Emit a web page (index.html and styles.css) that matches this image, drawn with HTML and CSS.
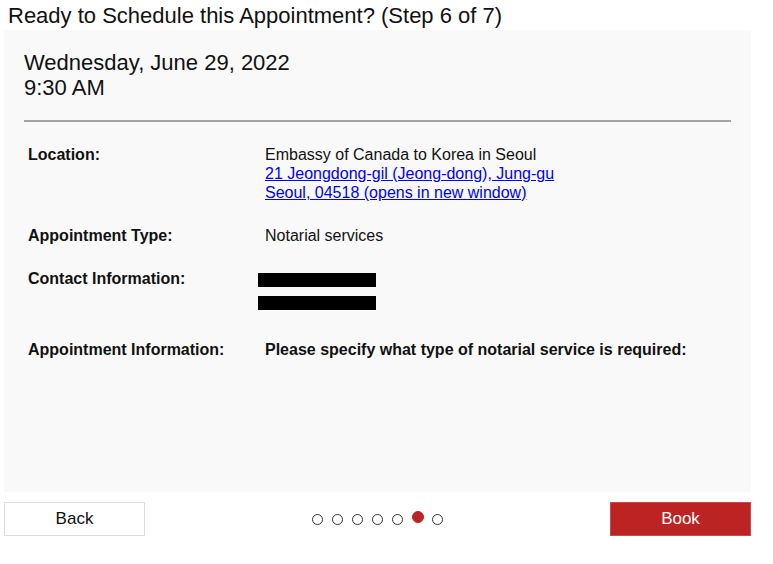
FILE: index.html
```html
<!DOCTYPE html>
<html lang="en">
<head>
    <meta charset="UTF-8">
    <meta name="viewport" content="width=device-width, initial-scale=1.0">
    <title>Schedule Appointment</title>
    <link rel="stylesheet" href="styles.css">
</head>
<body>
    <div class="page">
        <h1 class="title">Ready to Schedule this Appointment? (Step 6 of 7)</h1>

        <div class="panel">
            <div class="when">
                <div>Wednesday, June 29, 2022</div>
                <div>9:30 AM</div>
            </div>
            <hr class="divider">

            <div class="details">
                <div class="row">
                    <div class="label">Location:</div>
                    <div class="value">
                        Embassy of Canada to Korea in Seoul<br>
                        <a href="#">21 Jeongdong-gil (Jeong-dong), Jung-gu<br>Seoul, 04518 (opens in new window)</a>
                    </div>
                </div>
                <div class="row">
                    <div class="label">Appointment Type:</div>
                    <div class="value">Notarial services</div>
                </div>
                <div class="row">
                    <div class="label">Contact Information:</div>
                    <div class="value contact">
                        <div class="redact"></div>
                        <div class="redact"></div>
                    </div>
                </div>
                <div class="row">
                    <div class="label">Appointment Information:</div>
                    <div class="value strong">Please specify what type of notarial service is required:</div>
                </div>
            </div>
        </div>

        <div class="footer">
            <button class="btn btn-back">Back</button>
            <div class="steps">
                <span class="dot"></span>
                <span class="dot"></span>
                <span class="dot"></span>
                <span class="dot"></span>
                <span class="dot"></span>
                <span class="dot active"></span>
                <span class="dot"></span>
            </div>
            <button class="btn btn-book">Book</button>
        </div>
    </div>
</body>
</html>
```

FILE: styles.css
```css
body {
    margin: 0;
    font-family: "Liberation Sans", Arial, sans-serif;
    color: #111;
    background: #fff;
}

.page {
    width: 747px;
    margin-left: 4px;
}

.title {
    margin: 0;
    padding-left: 4px;
    font-size: 22px;
    font-weight: normal;
    line-height: 31px;
    height: 30px;
}

/* panel gris con los datos de la cita */
.panel {
    background: #f9f9f9;
    height: 462px;
    box-sizing: border-box;
    padding: 20px 20px 0;
}

.when {
    font-size: 22px;
    line-height: 25px;
}

.divider {
    margin: 20px 0 0;
    border: none;
    border-top: 2px solid #a3a3a3;
    height: 0;
}

.details {
    padding: 23px 0 0 4px;
    font-size: 16px;
    line-height: 19px;
}

.row {
    display: grid;
    grid-template-columns: 237px 1fr;
    padding-bottom: 24px;
}

.label {
    font-weight: bold;
}

.value a {
    color: #0000ee;
}

.strong {
    font-weight: bold;
}

.contact {
    padding-bottom: 6px;
}

.redact {
    width: 118px;
    height: 14px;
    background: #000;
    margin: 4px 0 0 -7px;
}

.redact + .redact {
    margin-top: 9px;
}

.footer {
    display: flex;
    justify-content: space-between;
    align-items: center;
    margin-top: 10px;
}

.btn {
    width: 141px;
    height: 34px;
    font-family: inherit;
    font-size: 17px;
    cursor: pointer;
}

.btn-back {
    background: #fff;
    border: 1px solid #dcdcdc;
    color: #111;
}

.btn-book {
    background: #bb2422;
    border: 1px solid #c94a48;
    color: #fff;
}

.steps {
    display: flex;
    align-items: center;
    gap: 9px;
}

.dot {
    width: 11px;
    height: 11px;
    box-sizing: border-box;
    border: 1.5px solid #333;
    border-radius: 50%;
}

.dot.active {
    width: 12px;
    height: 12px;
    background: #bb2422;
    border-color: #bb2422;
    margin: 0 -1px 4px 0;
}
```
